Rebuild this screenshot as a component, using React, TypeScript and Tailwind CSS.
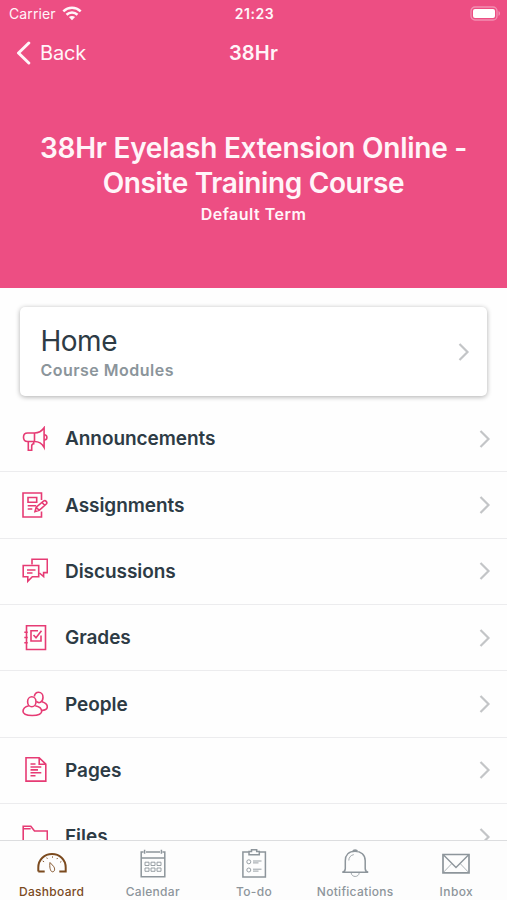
import * as React from "react";

type Item = { label: string; spacing?: string; icon: React.ReactNode };

const rows: Item[] = [
  {
    label: "Announcements",
    icon: (
      <>
        <path d="M12.5 7H5.6C3 7 1.5 8.8 1.5 11.2s1.5 4.3 4.1 4.3h6.9zM12.5 7c4 0 7.5-2.2 9.6-5.2v19.6c-2-3.6-5.6-5.9-9.6-5.9" />
        <path d="M22.2 8.8c3.6.2 3.6 5 0 5.200M6.3 15.600v8.700h3.400v-4.300c0-1.300.6-2 2-2.200v-2.200" />
      </>
    ),
  },
  {
    label: "Assignments",
    icon: (
      <>
        <path d="M19.5 8V1H1v24h18.500v-5.500" />
        <path d="M6 5.500h8.700v4.700H6zM5.700 13.800h8.500M5.700 17h4.600" />
        <path d="M13 19.500l1.200-4.300 7.600-6.300c1.600-1 3.900 1.200 2.700 2.900l-7.300 6.600zM20 10.500l2.700 2.800M14.200 15.300l2.900 3" />
      </>
    ),
  },
  {
    label: "Discussions",
    icon: (
      <>
        <path d="M10 6.500V1.300h15.300v13.300h-3.700v4L17.400 15" />
        <path d="M1.200 7.500h15.500v11.300h-6.400l-4.500 4.500v-4.500H1.200zM5 12h8.500M5 15h5.500" />
      </>
    ),
  },
  {
    label: "Grades",
    icon: (
      <>
        <path d="M4.500.8h19v23.700h-19zM2.300 7.300h3.500M2.300 12.500h3.500M2.300 17.700h3.500" />
        <path d="M19 10.500V16H9V5.700h7M11.500 10l2.500 2.700 5.500-7" />
      </>
    ),
  },
  {
    label: "People",
    icon: (
      <>
        <ellipse cx="9.800" cy="10.800" rx="4.200" ry="5" />
        <path d="M6.800 14.700C3.300 15.600 1 17.800 1 20.300 1 23 5 24.500 10.200 24.500s9.500-1.500 9.500-4.200c0-2.500-2.700-4.800-6.500-5.600" />
        <path d="M12.300 5.500c.4-2.500 2-4.200 4.300-4.200 2.600 0 4.400 2.200 4.400 5 0 2.300-1 4.200-2.600 5-1.600.7-3 .1-4-.9M20 10.700c3.200 1 5.300 3 5.300 5.100 0 2.200-2.300 3.500-5.700 3.700" />
      </>
    ),
  },
  {
    label: "Pages",
    icon: (
      <>
        <path d="M4 .8h13.200l6.600 6.400v16.900H4zM17.200.8v6.400h6.600" />
        <path d="M8.500 7h5M8.500 10h10.800M8.500 12.900h7.500M8.500 15.800h10.800M8.500 18.700h5" />
      </>
    ),
  },
  {
    label: "Files",
    icon: <path d="M1.200 22V2.300h7.600l3.700 4.700h12.800v15M1.200 4.700h7.500" />,
  },
];

const tabs: Item[] = [
  {
    label: "Dashboard",
    spacing: "tracking-[0.3px]",
    icon: (
      <>
        <path strokeWidth="2" d="M1.300 22.600v-4.100C1.300 10.400 7.500 4.900 15 4.900s13.700 5.500 13.700 13.600v4.100h-6.400M1.300 22.600h6.400" />
        <path strokeWidth=".9" d="M13 13.500c-.7 4 .2 9 2.300 9.300 2.600.2 3-3.300 1.200-5.500zM5.700 12l1.400.8M9.700 8.600l.7 1.200M15.500 7.400v1.300M20.500 9l-.6 1.100M24.300 12.500l-1.200.8" />
      </>
    ),
  },
  {
    label: "Calendar",
    spacing: "tracking-[0.3px]",
    icon: (
      <>
        <path strokeWidth="1.500" d="M5.500 2.900H3.200v24.900h23.600V2.900h-2.300M8 2.900h14M3.200 9h23.600M6.600.7v4.100M23.400.7v4.100" />
        <path strokeWidth=".9" d="M7 13.200h4v3.300H7zM13 13.200h4v3.300h-4zM19 13.200h4v3.300h-4zM7 19h4v3.300H7zM13 19h4v3.300h-4zM19 19h4v3.300h-4z" />
      </>
    ),
  },
  {
    label: "To-do",
    spacing: "tracking-[0.35px]",
    icon: (
      <>
        <path strokeWidth="1.500" d="M9.800 2.900H3.900v25h22.500v-25h-5.900" />
        <path strokeWidth="1.500" d="M10 5.700h10.300V2.500h-2.600V.8h-5.200v1.700H10z" />
        <g strokeWidth=".9">
          <circle cx="9.800" cy="12.800" r="2" />
          <circle cx="9.800" cy="21" r="2" />
          <path d="M14 12h8.500M14 13.900h5.500M14 20.200h8.500M14 22.100h5.500" />
        </g>
      </>
    ),
  },
  {
    label: "Notifications",
    spacing: "tracking-[0.3px]",
    icon: (
      <>
        <path strokeWidth="1.500" d="M2.300 23.300c2.300-.5 3-1.400 3-3.700v-7.900C5.300 6 9 2.200 15 2.200s10.200 3.800 10.200 9.500v7.900c0 2.300.7 3.200 3 3.700zM12.900 2.100c.4-1.600 4-1.600 4.400 0" />
        <path strokeWidth=".8" d="M8.800 11.500c0-3 1.800-5.300 5-5.900M11.200 24c.5 4.600 7.500 4.600 8 0" />
      </>
    ),
  },
  {
    label: "Inbox",
    spacing: "tracking-[0.4px]",
    icon: (
      <>
        <path strokeWidth="1.700" d="M2 5.500h26v18.300H2z" />
        <path strokeWidth="1.400" d="M2.300 5.800L15 18.400 27.700 5.800" />
        <path strokeWidth=".7" d="M2.300 23.500l8.400-8.800M27.700 23.500l-8.400-8.800" />
      </>
    ),
  },
];

function Chevron() {
  return (
    <svg width="12" height="18" viewBox="0 0 12 18" fill="none" stroke="#c3c5c7" strokeWidth="2.200" className="shrink-0">
      <path d="M1.500 1l8 8-8 8" />
    </svg>
  );
}

export default function App() {
  return (
    <div className="flex h-[900px] w-[507px] flex-col overflow-hidden bg-[#fefefe] font-['Inter','Liberation_Sans',sans-serif] text-[#2d3b45]">
      <header className="h-[288px] shrink-0 bg-[#ed4e83] text-[#fff5f9]">
        {/* Status bar */}
        <div className="grid h-[27px] grid-cols-[1fr_auto_1fr] items-center pr-[6px] pl-[9px] text-[14px]">
          <div className="flex items-center gap-[6px]">
            <span className="tracking-[0.1px]">Carrier</span>
            <svg width="20" height="15" viewBox="0 0 20 15" fill="none" stroke="currentColor" strokeWidth="2.500">
              <path d="M1.300 5.300c5-4.700 12.400-4.700 17.400 0M4.500 8.700c3.200-2.900 7.800-2.900 11 0" />
              <path d="M6.900 11.100c1.800-1.600 4.400-1.600 6.200 0L10 14.200z" fill="currentColor" stroke="none" />
            </svg>
          </div>
          <span className="pr-[1px] text-center font-semibold tracking-[0.6px]">21:23</span>
          <svg width="31" height="15" viewBox="0 0 31 15" className="justify-self-end">
            <rect x="1" y="1" width="26" height="13" rx="4" fill="none" stroke="#f28fb2" strokeWidth="1.300" />
            <rect x="3" y="3" width="22" height="9" rx="2" fill="#fff" />
            <path d="M28.500 5c2 .8 2 4 0 4.800z" fill="#f28fb2" />
          </svg>
        </div>
        {/* Navigation */}
        <div className="grid h-[51px] grid-cols-3 items-center px-[16px] text-[20px]">
          <div className="flex items-center gap-[9px]">
            <svg width="15" height="24" viewBox="0 0 15 24" fill="none" stroke="currentColor" strokeWidth="3" strokeLinecap="round" strokeLinejoin="round">
              <path d="M12.800 2L2.500 12l10.300 10" />
            </svg>
            <span className="tracking-[-0.2px]">Back</span>
          </div>
          <h1 className="text-center font-semibold tracking-[0.2px]">38Hr</h1>
        </div>
        <div className="pt-[53px] text-center">
          <h2 className="whitespace-nowrap text-[28px] font-semibold leading-[35px] tracking-[-0.25px]">
            38Hr Eyelash Extension Online -<br />
            <span className="tracking-[-0.37px]">Onsite Training Course</span>
          </h2>
          <p className="mt-[3px] text-[16px] font-semibold leading-[20px] tracking-[0.5px]">Default Term</p>
        </div>
      </header>

      <main className="min-h-0 flex-1 overflow-hidden">
        <div className="mx-[20px] mt-[19px] mb-[10px] flex h-[89px] items-center justify-between rounded-[5px] bg-white pr-[17px] pl-[20.500px] shadow-[0_1px_5px_rgba(0,0,0,0.32)]">
          <div>
            <div className="pt-[1px] text-[28px] leading-[34px] tracking-[-0.5px]">Home</div>
            <div className="mt-[2px] text-[16px] font-semibold leading-[20px] tracking-[0.48px] text-[#8b959b]">Course Modules</div>
          </div>
          <Chevron />
        </div>
        {rows.map((row) => (
          <div key={row.label} className="flex h-[66.350px] items-center border-b-[1.500px] border-[#ececee] pr-[16px] pl-[22px]">
            <svg width="26" height="26" viewBox="0 0 26 26" fill="none" stroke="#e63b74" strokeWidth="1.600" className="mr-[17px] shrink-0">
              {row.icon}
            </svg>
            <span className="flex-1 pt-[2px] text-[19px] font-semibold tracking-[-0.05px]">{row.label}</span>
            <Chevron />
          </div>
        ))}
      </main>

      <nav className="grid h-[60px] shrink-0 grid-cols-5 border-t border-[#dcdddf] bg-[#fdfdfd] pl-[1px]">
        {tabs.map((tab, i) => (
          <div key={tab.label} className={i === 0 ? "flex flex-col items-center pt-[8px] text-[#7b4a1e]" : "flex flex-col items-center pt-[8px] text-[#8d959b]"}>
            <svg width="30" height="30" viewBox="0 0 30 30" fill="none" stroke="currentColor">
              {tab.icon}
            </svg>
            <span className={`mt-[4px] text-[12px] font-medium leading-[17px] ${tab.spacing}`}>{tab.label}</span>
          </div>
        ))}
      </nav>
    </div>
  );
}
